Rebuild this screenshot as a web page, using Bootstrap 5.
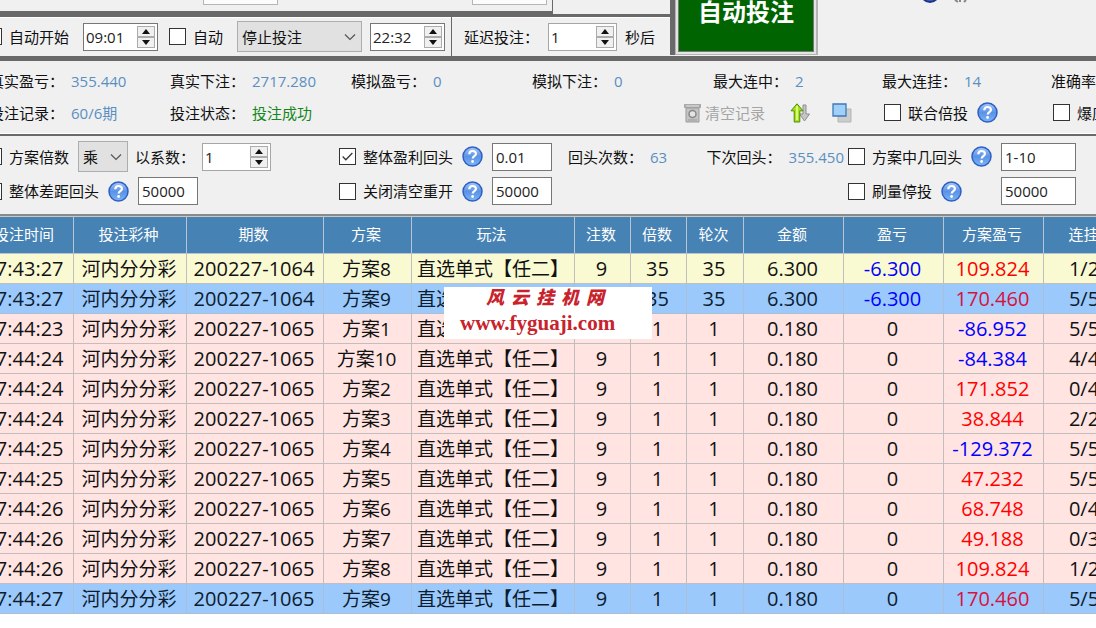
<!DOCTYPE html>
<html lang="zh-CN">
<head>
<meta charset="utf-8">
<meta name="viewport" content="width=device-width, initial-scale=1">
<title>自动投注</title>
<link rel="stylesheet" href="https://cdn.jsdelivr.net/npm/bootstrap@5.3.0/dist/css/bootstrap.min.css">
<style>
  body { font-family: "Open Sans", "Noto Sans CJK SC", sans-serif; font-size: 15px; line-height: 20px; color: #111; background: #fff; overflow-x: hidden; }
  /* the console is wider and taller than the view on three sides */
  .console { margin: 0 -31px 0 -25px; }
  .scroller { overflow: hidden; }
  .panel { background: #f0f0f0; }
  .topbar { margin-top: -29px; height: 90px; border-bottom: 5px solid #696969; }
  .timers { width: 695px; }
  .slot-a { width: 578px; height: 43px; border-right: 1px solid #696969; border-bottom: 3px solid #696969; }
  .slot-b { box-shadow: inset 0 1px #fff; border-top: 3px solid #696969; height: 42px; }
  .ghost { width: 75px; height: 34px; border: 1px solid #b5b5b5; background: #fcfcfc; }
  .auto-part { width: 477px; padding-left: 10px; border-right: 1px solid #696969; }
  .start-frame { border-left: 5px solid #696969; width: 148px; height: 84px; }
  .start-frame .inner { border: 1px solid #b4b4b4; border-width: 0 2px 1px 1px; background: #e3e3e3; padding: 0 2px 2px; height: 84px; }
  .start { background: #006400; color: #fff; font-size: 24px; font-weight: 700; line-height: 30px; border: 1px solid #777; border-radius: 0; }
  .stats { height: 73px; padding: 10px 0 0 14px; border-bottom: 1px solid #fff; }
  .stat-row { display: grid; grid-template-columns: repeat(4, 181px) repeat(2, 169px) 1fr; }
  .tool-row { display: grid; grid-template-columns: 181px 514px 200px 169px 1fr; margin-top: 11px; height: 21px; }
  .key { width: 75px; flex: none; white-space: nowrap; }
  .val { color: #5a8fc2; margin-left: 7px; white-space: nowrap; }
  .opts { height: 82px; border-top: 2px solid #696969; border-bottom: 2px solid #8a8a8a; padding: 5px 0 0 10px; }
  .opt-row { display: grid; grid-template-columns: 354px 509px 228px; height: 30px; margin-bottom: 5px; align-items: center; }
  .form-check-input.tick { width: 17px; height: 17px; margin: 0 7px 0 0; flex: none; border: 1px solid #333; border-radius: 0; background-color: #fff; box-shadow: none; }
  .tick:checked { background-image: url("data:image/svg+xml,%3Csvg xmlns='http://www.w3.org/2000/svg' viewBox='0 0 17 17'%3E%3Cpath d='M3 8.5l3.6 3.7L14 4.5' fill='none' stroke='%23333' stroke-width='1.4'/%3E%3C/svg%3E"); background-size: 100%; }
  .lbl { white-space: nowrap; }
  .form-control.box { width: 60px; height: 28px; padding: 0 3px; border: 1px solid #777; border-radius: 0; font-size: 15px; line-height: 20px; color: #222; background: #fff; }
  .form-control.box.wide { width: 75px; }
  .spin { height: 28px; width: 69px; border: 1px solid #a6a6a6; background: #fff; flex: none; padding-right: 2px; }
  .spin.time { width: 75px; border-color: #777; }
  .spin input { flex: 1; min-width: 0; border: 0; padding: 0 0 0 2px; background: none; color: #222; outline: 0; height: 24px; }
  .spin button { display: flex; align-items: center; justify-content: center; width: 18px; height: 11px; padding: 0; border: 1px solid #acacac; background: #f0f0f0; }
  .spin svg { width: 8px; height: 5px; display: block; }
  .form-select.drop { border: 1px solid #adadad; border-radius: 0; padding: 0 22px 0 4px; height: 31px; font-size: 15px; line-height: 20px; color: #111; flex: none; background: #e1e1e1 url("data:image/svg+xml,%3Csvg xmlns='http://www.w3.org/2000/svg' viewBox='0 0 12 8'%3E%3Cpath d='M1 1.5l5 5 5-5' fill='none' stroke='%23555' stroke-width='1.2'/%3E%3C/svg%3E") no-repeat right 5px center; background-size: 12px 8px; }
  .help { width: 21px; height: 21px; flex: none; border: 0; padding: 0; background: none; display: block; }
  .help svg, .tool svg { display: block; }
  .tool { border: 0; padding: 0; background: none; color: #a5a5a5; }
  .grid-area { position: relative; }
  .log { table-layout: fixed; width: 100%; margin: 0; border-collapse: separate; border-spacing: 0; }
  .log th { height: 38px; padding: 0 3px 2px 0; background: #4682b4; color: #fff; font-weight: 400; text-align: center; vertical-align: middle; border-right: 1px solid #b8c4d0; border-top: 1px solid #c8c8c8; border-bottom: 1px solid #b8c4d0; white-space: nowrap; }
  .log td { height: 30px; padding: 0 2px 0 0; font-size: 20px; line-height: 28px; text-align: center; vertical-align: middle; border-right: 1px solid #c3bebe; border-bottom: 1px solid #c3bebe; white-space: nowrap; background: #ffe4e1; }
  .log tr > :first-child { padding-right: 0; }
  .log .zh { font-size: 19px; }
  .log td.play { text-align: left; padding-left: 5px; overflow: hidden; }
  .log .fresh td { background: #fafad2; }
  .log .pick td { background: #9bc9fb; border-color: #a9bfd6; color: #0b1c30; }
  .log td.gain { color: #f00 !important; }
  .log .pick td.gain { color: #d7123f !important; }
  .log td.loss { color: #00f !important; }
  .stamp { position: absolute; left: 469px; top: 71px; width: 208px; height: 52px; background: #fff; color: #c8232c; }
  .stamp .brush { display: flex; gap: 7px; font-size: 18px; font-weight: 900; font-style: italic; line-height: 20px; padding-left: 42px; }
  .stamp .site { display: block; color: #c8232c; text-decoration: none; font: bold 21px/24px "Liberation Serif", serif; padding: 4px 0 0 16px; }
</style>
</head>
<body>
<svg class="position-absolute" width="0" height="0" aria-hidden="true">
  <defs>
    <linearGradient id="ball" x1="0" y1="0" x2="0" y2="1"><stop offset="0" stop-color="#a9c9f7"/><stop offset=".5" stop-color="#5a92e6"/><stop offset="1" stop-color="#7db4f5"/></linearGradient>
    <symbol id="up" viewBox="0 0 8 5"><path d="M0 5L4 0l4 5z" fill="#111"/></symbol>
    <symbol id="down" viewBox="0 0 8 5"><path d="M0 0l4 5 4-5z" fill="#111"/></symbol>
    <symbol id="ask" viewBox="0 0 21 21"><circle cx="10.5" cy="10.5" r="9.500" fill="url(#ball)" stroke="#2f5fc4" stroke-width="1.500"/><path d="M7.300 8.200c0-4.200 6.600-4.200 6.600-.5 0 2.400-3.200 2.300-3.200 4.800" fill="none" stroke="#fff" stroke-width="2.200"/><circle cx="10.600" cy="15.500" r="1.400" fill="#fff"/></symbol>
  </defs>
</svg>
<div class="scroller">
<div class="console">
  <header class="topbar panel d-flex">
    <div class="timers d-flex flex-column">
      <div class="d-flex flex-fill">
        <div class="slot-a d-flex align-items-start"><div class="ghost" style="margin-left:228px"></div><div class="ghost" style="margin-left:194px"></div></div>
      </div>
      <div class="slot-b d-flex">
        <div class="auto-part d-flex align-items-center">
          <input class="form-check-input tick" type="checkbox" id="c1"><label class="lbl" for="c1">自动开始</label>
          <div class="spin time d-flex align-items-center" style="margin-left:14px"><input type="text" value="09:01" aria-label="开始时间"><div><button type="button" aria-label="加"><svg><use href="#up"/></svg></button><button type="button" aria-label="减"><svg><use href="#down"/></svg></button></div></div>
          <input class="form-check-input tick" style="margin-left:11px" type="checkbox" id="c2"><label class="lbl" for="c2">自动</label>
          <select class="form-select drop" style="width:125px;margin-left:14px" aria-label="到时动作"><option>停止投注</option></select>
          <div class="spin time d-flex align-items-center ms-2"><input type="text" value="22:32" aria-label="停止时间"><div><button type="button" aria-label="加"><svg><use href="#up"/></svg></button><button type="button" aria-label="减"><svg><use href="#down"/></svg></button></div></div>
        </div>
        <div class="d-flex align-items-center" style="padding-left:12px">
          <label class="key" for="delay">延迟投注：</label>
          <div class="spin d-flex align-items-center" style="margin:0 8px 0 9px"><input type="text" id="delay" value="1"><div><button type="button" aria-label="加"><svg><use href="#up"/></svg></button><button type="button" aria-label="减"><svg><use href="#down"/></svg></button></div></div>
          <span class="lbl">秒后</span>
        </div>
      </div>
    </div>
    <div class="start-frame"><div class="inner"><button type="button" class="start w-100 h-100">自动投注</button></div></div>
    <svg width="150" height="36" viewBox="0 0 150 36" aria-hidden="true">
      <circle cx="18" cy="22" r="7" fill="#aaa"/><circle cx="112" cy="22" r="9" fill="#3f5fbf" stroke="#1c3488" stroke-width="2"/><path d="M137 29l3 2M142 28v3M148 29l-2 2" stroke="#888" stroke-width="2"/>
    </svg>
  </header>

  <section class="stats panel">
    <div class="stat-row">
      <div class="d-flex"><span class="key">真实盈亏：</span><span class="val">355.440</span></div>
      <div class="d-flex"><span class="key">真实下注：</span><span class="val">2717.280</span></div>
      <div class="d-flex"><span class="key">模拟盈亏：</span><span class="val">0</span></div>
      <div class="d-flex"><span class="key">模拟下注：</span><span class="val">0</span></div>
      <div class="d-flex"><span class="key">最大连中：</span><span class="val">2</span></div>
      <div class="d-flex"><span class="key">最大连挂：</span><span class="val">14</span></div>
      <div class="d-flex"><span class="key">准确率：</span></div>
    </div>
    <div class="tool-row align-items-center">
      <div class="d-flex"><span class="key">投注记录：</span><span class="val">60/6期</span></div>
      <div class="d-flex"><span class="key">投注状态：</span><span class="val" style="color:#14871c">投注成功</span></div>
      <div class="d-flex align-items-center">
        <button type="button" class="tool d-flex align-items-center"><svg width="17" height="20" viewBox="0 0 17 20" class="me-1"><path d="M0 1h17v4H0z" fill="#aaa"/><path d="M2 3h13" stroke="#e8e8e8"/><path d="M2 5h13v14H2z" fill="#c4c4c4" stroke="#999"/><circle cx="8.5" cy="11" r="3.5" fill="#e4e4e4" stroke="#888" stroke-width="1.5"/><path d="M4 17h9" stroke="#999"/></svg>清空记录</button>
        <button type="button" class="tool" style="margin-left:25px" aria-label="排序"><svg width="21" height="20" viewBox="0 0 21 20"><path d="M13 2h3v9h3.500L14.500 18l-5-7H13z" fill="#c6c6c6" stroke="#8d8d8d"/><path d="M7 .8l6 7H9.800V19H4.200V7.800H1z" fill="#a3e31a" stroke="#4f8a0c"/><path d="M7 3v14" stroke="#dcff70" stroke-width="2"/></svg></button>
        <button type="button" class="tool" style="margin-left:21px" aria-label="窗口"><svg width="20" height="20" viewBox="0 0 20 20"><path d="M6 6h13v13H6z" fill="#ccc" stroke="#b5b5b5"/><path d="M1 1h13v12H1z" fill="#9fd0fa" stroke="#3f78b4" stroke-width="1.300"/></svg></button>
      </div>
      <div class="d-flex align-items-center"><input class="form-check-input tick" type="checkbox" id="c3"><label class="lbl" for="c3">联合倍投</label><button type="button" class="help" style="margin-left:9px" aria-label="帮助"><svg width="21" height="21"><use href="#ask"/></svg></button></div>
      <div class="d-flex align-items-center"><input class="form-check-input tick" type="checkbox" id="c4"><label class="lbl" for="c4">爆庄</label></div>
    </div>
  </section>

  <section class="opts panel">
    <div class="opt-row">
      <div class="d-flex align-items-center">
        <input class="form-check-input tick" type="checkbox" id="c5"><label class="lbl" for="c5">方案倍数</label>
        <select class="form-select drop" style="width:50px;margin:0 7px 0 9px" aria-label="运算"><option>乘</option></select>
        <label class="lbl" for="factor">以系数：</label>
        <div class="spin d-flex align-items-center" style="margin-left:7px"><input type="text" id="factor" value="1"><div><button type="button" aria-label="加"><svg><use href="#up"/></svg></button><button type="button" aria-label="减"><svg><use href="#down"/></svg></button></div></div>
      </div>
      <div class="d-flex align-items-center">
        <input class="form-check-input tick" type="checkbox" id="c6" checked><label class="lbl" for="c6">整体盈利回头</label>
        <button type="button" class="help" style="margin:0 9px" aria-label="帮助"><svg width="21" height="21"><use href="#ask"/></svg></button>
        <input class="form-control box" type="text" value="0.01" aria-label="盈利值">
        <span class="key ms-3">回头次数：</span><span class="val">63</span>
        <span class="key ms-auto">下次回头：</span><span class="val" style="margin-right:4px">355.450</span>
      </div>
      <div class="d-flex align-items-center">
        <input class="form-check-input tick" type="checkbox" id="c7"><label class="lbl" for="c7">方案中几回头</label>
        <button type="button" class="help" style="margin-left:9px" aria-label="帮助"><svg width="21" height="21"><use href="#ask"/></svg></button>
        <input class="form-control box wide ms-auto" type="text" value="1-10" aria-label="中几回头">
      </div>
    </div>
    <div class="opt-row">
      <div class="d-flex align-items-center">
        <input class="form-check-input tick" type="checkbox" id="c8"><label class="lbl" for="c8">整体差距回头</label>
        <button type="button" class="help" style="margin:0 9px" aria-label="帮助"><svg width="21" height="21"><use href="#ask"/></svg></button>
        <input class="form-control box" type="text" value="50000" aria-label="差距值">
      </div>
      <div class="d-flex align-items-center">
        <input class="form-check-input tick" type="checkbox" id="c9"><label class="lbl" for="c9">关闭清空重开</label>
        <button type="button" class="help" style="margin:0 9px" aria-label="帮助"><svg width="21" height="21"><use href="#ask"/></svg></button>
        <input class="form-control box" type="text" value="50000" aria-label="重开值">
      </div>
      <div class="d-flex align-items-center">
        <input class="form-check-input tick" type="checkbox" id="c10"><label class="lbl" for="c10">刷量停投</label>
        <button type="button" class="help" style="margin-left:9px" aria-label="帮助"><svg width="21" height="21"><use href="#ask"/></svg></button>
        <input class="form-control box wide ms-auto" type="text" value="50000" aria-label="停投值">
      </div>
    </div>
  </section>

  <main class="grid-area">
    <table class="log">
      <colgroup><col style="width:99px"><col style="width:113px"><col style="width:137px"><col style="width:88px"><col style="width:163px"><col style="width:56px"><col style="width:56px"><col style="width:57px"><col style="width:100px"><col style="width:100px"><col style="width:100px"><col></colgroup>
      <thead><tr><th>投注时间</th><th>投注彩种</th><th>期数</th><th>方案</th><th>玩法</th><th>注数</th><th>倍数</th><th>轮次</th><th>金额</th><th>盈亏</th><th>方案盈亏</th><th>连挂</th></tr></thead>
      <tbody>
        <tr class="fresh"><td>17:43:27</td><td class="zh">河内分分彩</td><td>200227-1064</td><td class="zh">方案8</td><td class="zh play">直选单式【任二】</td><td>9</td><td>35</td><td>35</td><td>6.300</td><td class="loss">-6.300</td><td class="gain">109.824</td><td>1/2</td></tr>
        <tr class="pick"><td>17:43:27</td><td class="zh">河内分分彩</td><td>200227-1064</td><td class="zh">方案9</td><td class="zh play">直选单式【任二】</td><td>9</td><td>35</td><td>35</td><td>6.300</td><td class="loss">-6.300</td><td class="gain">170.460</td><td>5/5</td></tr>
        <tr><td>17:44:23</td><td class="zh">河内分分彩</td><td>200227-1065</td><td class="zh">方案1</td><td class="zh play">直选单式【任二】</td><td>9</td><td>1</td><td>1</td><td>0.180</td><td>0</td><td class="loss">-86.952</td><td>5/5</td></tr>
        <tr><td>17:44:24</td><td class="zh">河内分分彩</td><td>200227-1065</td><td class="zh">方案10</td><td class="zh play">直选单式【任二】</td><td>9</td><td>1</td><td>1</td><td>0.180</td><td>0</td><td class="loss">-84.384</td><td>4/4</td></tr>
        <tr><td>17:44:24</td><td class="zh">河内分分彩</td><td>200227-1065</td><td class="zh">方案2</td><td class="zh play">直选单式【任二】</td><td>9</td><td>1</td><td>1</td><td>0.180</td><td>0</td><td class="gain">171.852</td><td>0/4</td></tr>
        <tr><td>17:44:24</td><td class="zh">河内分分彩</td><td>200227-1065</td><td class="zh">方案3</td><td class="zh play">直选单式【任二】</td><td>9</td><td>1</td><td>1</td><td>0.180</td><td>0</td><td class="gain">38.844</td><td>2/2</td></tr>
        <tr><td>17:44:25</td><td class="zh">河内分分彩</td><td>200227-1065</td><td class="zh">方案4</td><td class="zh play">直选单式【任二】</td><td>9</td><td>1</td><td>1</td><td>0.180</td><td>0</td><td class="loss">-129.372</td><td>5/5</td></tr>
        <tr><td>17:44:25</td><td class="zh">河内分分彩</td><td>200227-1065</td><td class="zh">方案5</td><td class="zh play">直选单式【任二】</td><td>9</td><td>1</td><td>1</td><td>0.180</td><td>0</td><td class="gain">47.232</td><td>5/5</td></tr>
        <tr><td>17:44:26</td><td class="zh">河内分分彩</td><td>200227-1065</td><td class="zh">方案6</td><td class="zh play">直选单式【任二】</td><td>9</td><td>1</td><td>1</td><td>0.180</td><td>0</td><td class="gain">68.748</td><td>0/4</td></tr>
        <tr><td>17:44:26</td><td class="zh">河内分分彩</td><td>200227-1065</td><td class="zh">方案7</td><td class="zh play">直选单式【任二】</td><td>9</td><td>1</td><td>1</td><td>0.180</td><td>0</td><td class="gain">49.188</td><td>0/3</td></tr>
        <tr><td>17:44:26</td><td class="zh">河内分分彩</td><td>200227-1065</td><td class="zh">方案8</td><td class="zh play">直选单式【任二】</td><td>9</td><td>1</td><td>1</td><td>0.180</td><td>0</td><td class="gain">109.824</td><td>1/2</td></tr>
        <tr class="pick"><td>17:44:27</td><td class="zh">河内分分彩</td><td>200227-1065</td><td class="zh">方案9</td><td class="zh play">直选单式【任二】</td><td>9</td><td>1</td><td>1</td><td>0.180</td><td>0</td><td class="gain">170.460</td><td>5/5</td></tr>
      </tbody>
    </table>
    <div class="stamp"><div class="brush"><span>风</span><span>云</span><span>挂</span><span>机</span><span>网</span></div><a class="site" href="#">www.fyguaji.com</a></div>
  </main>
</div>
</div>
<script src="https://cdn.jsdelivr.net/npm/bootstrap@5.3.0/dist/js/bootstrap.bundle.min.js"></script>
</body>
</html>
